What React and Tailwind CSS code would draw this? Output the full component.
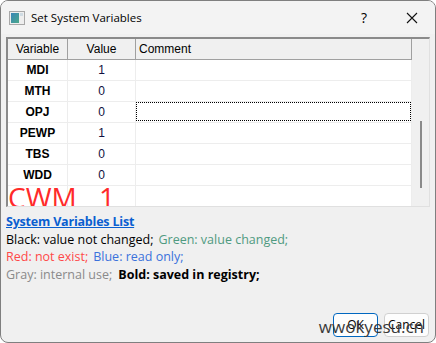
import React from 'react';

const rows = [
    { name: 'MDI', value: '1' },
    { name: 'MTH', value: '0' },
    { name: 'OPJ', value: '0', focus: true },
    { name: 'PEWP', value: '1' },
    { name: 'TBS', value: '0' },
    { name: 'WDD', value: '0' },
];

const AppIcon = () => (
    <svg width="16" height="14" viewBox="0 0 16 14">
        <defs>
            <linearGradient id="g" x1="0" y1="0" x2="1" y2="1">
                <stop offset="0" stopColor="#3a86b8" />
                <stop offset="1" stopColor="#4aa88a" />
            </linearGradient>
        </defs>
        <rect x="0.5" y="0.5" width="15" height="13" fill="#eeeeee" stroke="#a8a8a8" />
        <rect x="2" y="2" width="8" height="10" fill="url(#g)" />
        <rect x="11" y="2" width="3" height="3" fill="#cfdbe3" />
    </svg>
);

const App = () => {
    return (
        <div className="w-[436px] h-[343px] bg-[#f0f0f0] border border-[#7f7f7f] rounded-[8px] flex flex-col overflow-hidden relative" style={{ fontFamily: '"Open Sans", "Noto Sans", sans-serif' }}>
            {/* title bar */}
            <div className="h-[33px] flex items-center bg-[#f3f3f3] shrink-0">
                <div className="ml-[8px] mt-[1px]"><AppIcon /></div>
                <span className="ml-[6px] text-[11.5px] text-black">Set System Variables</span>
                <span className="ml-auto text-[14px] text-black mr-[39px]">?</span>
                <svg width="12" height="12" viewBox="0 0 12 12" className="mr-[17px]">
                    <path d="M1 1 L11 11 M11 1 L1 11" stroke="#111" strokeWidth="1.1" />
                </svg>
            </div>

            {/* table */}
            <div className="mx-[5px] mt-[3px] h-[170px] flex border-t-2 border-l-2 border-t-[#8a8a8a] border-l-[#8a8a8a] border-r border-b border-r-[#e0e0e0] border-b-[#e0e0e0] overflow-hidden" style={{ fontFamily: '"Liberation Sans", Arial, sans-serif' }}>
                <div className="w-[404px] flex flex-col bg-white">
                    <div className="h-[21px] flex bg-[#f0f0f0] border-b border-[#a0a0a0] text-[12px] text-black shrink-0">
                        <div className="w-[60px] border-r border-[#a0a0a0] flex items-center justify-center">Variable</div>
                        <div className="w-[68px] border-r border-[#a0a0a0] flex items-center justify-center">Value</div>
                        <div className="flex-1 border-r border-[#a0a0a0] flex items-center pl-[3px]">Comment</div>
                    </div>
                    {rows.map((r) => (
                        <div key={r.name} className="h-[21px] flex border-b border-[#ededed] text-[12px] shrink-0">
                            <div className="w-[60px] border-r border-[#ededed] flex items-center justify-center font-bold text-black">{r.name}</div>
                            <div className="w-[68px] border-r border-[#ededed] flex items-center justify-center text-[#101040]">{r.value}</div>
                            <div className="flex-1 border-r border-[#ededed] relative">
                                {r.focus && <div className="absolute inset-x-0 top-0 bottom-[1px] border border-dotted border-black" />}
                            </div>
                        </div>
                    ))}
                    <div className="h-[21px] flex text-[#ff2a2a] text-[28px] leading-none overflow-hidden shrink-0" style={{ fontFamily: '"Open Sans", "Noto Sans", sans-serif' }}>
                        <div className="w-[60px] border-r border-[#ededed] whitespace-nowrap relative">
                            <span className="absolute left-[0px] top-[-3px]">CWM</span>
                        </div>
                        <div className="w-[68px] border-r border-[#ededed] relative">
                            <span className="absolute left-[31px] top-[-3px]">1</span>
                        </div>
                        <div className="flex-1 border-r border-[#ededed]" />
                    </div>
                </div>
                <div className="w-[17px] bg-[#f0f0f0] flex justify-center pt-[82px]">
                    <div className="w-[2px] h-[67px] bg-[#8a8a8a]" />
                </div>
            </div>

            {/* legend */}
            <div className="px-[5px] pt-[6px] text-[12.5px] leading-[17px]">
                <div className="font-bold text-[#0a5fd0] underline text-[12.5px] tracking-[-0.2px]">System Variables List</div>
                <div className="mt-[1px]">
                    <span className="text-black">Black: value not changed;</span>
                    <span className="ml-[5px] text-[#4f9a80]">Green: value changed;</span>
                </div>
                <div>
                    <span className="text-[#ff4848]">Red: not exist;</span>
                    <span className="ml-[5px] text-[#3a72dc]">Blue: read only;</span>
                </div>
                <div className="mt-[1px]">
                    <span className="text-[#8a8a8a]">Gray: internal use;</span>
                    <span className="ml-[6px] font-bold text-black">Bold: saved in registry;</span>
                </div>
            </div>

            <div className="flex-1" />

            {/* buttons */}
            <div className="flex justify-end gap-[6px] pr-[6px] pb-[5px] relative">
                <button className="w-[45px] h-[24px] rounded-[4px] border border-[#0067c0] bg-[#fdfdfd] text-[12px] text-black">OK</button>
                <button className="w-[45px] h-[24px] rounded-[4px] border border-[#d0d0d0] bg-[#fdfdfd] text-[12px] text-black">Cancel</button>
                <span className="absolute right-[11px] top-[1px] text-[17px] text-[#3a3a3a] pointer-events-none whitespace-nowrap">wwokyesu.cn</span>
            </div>
        </div>
    );
};

export default App;
